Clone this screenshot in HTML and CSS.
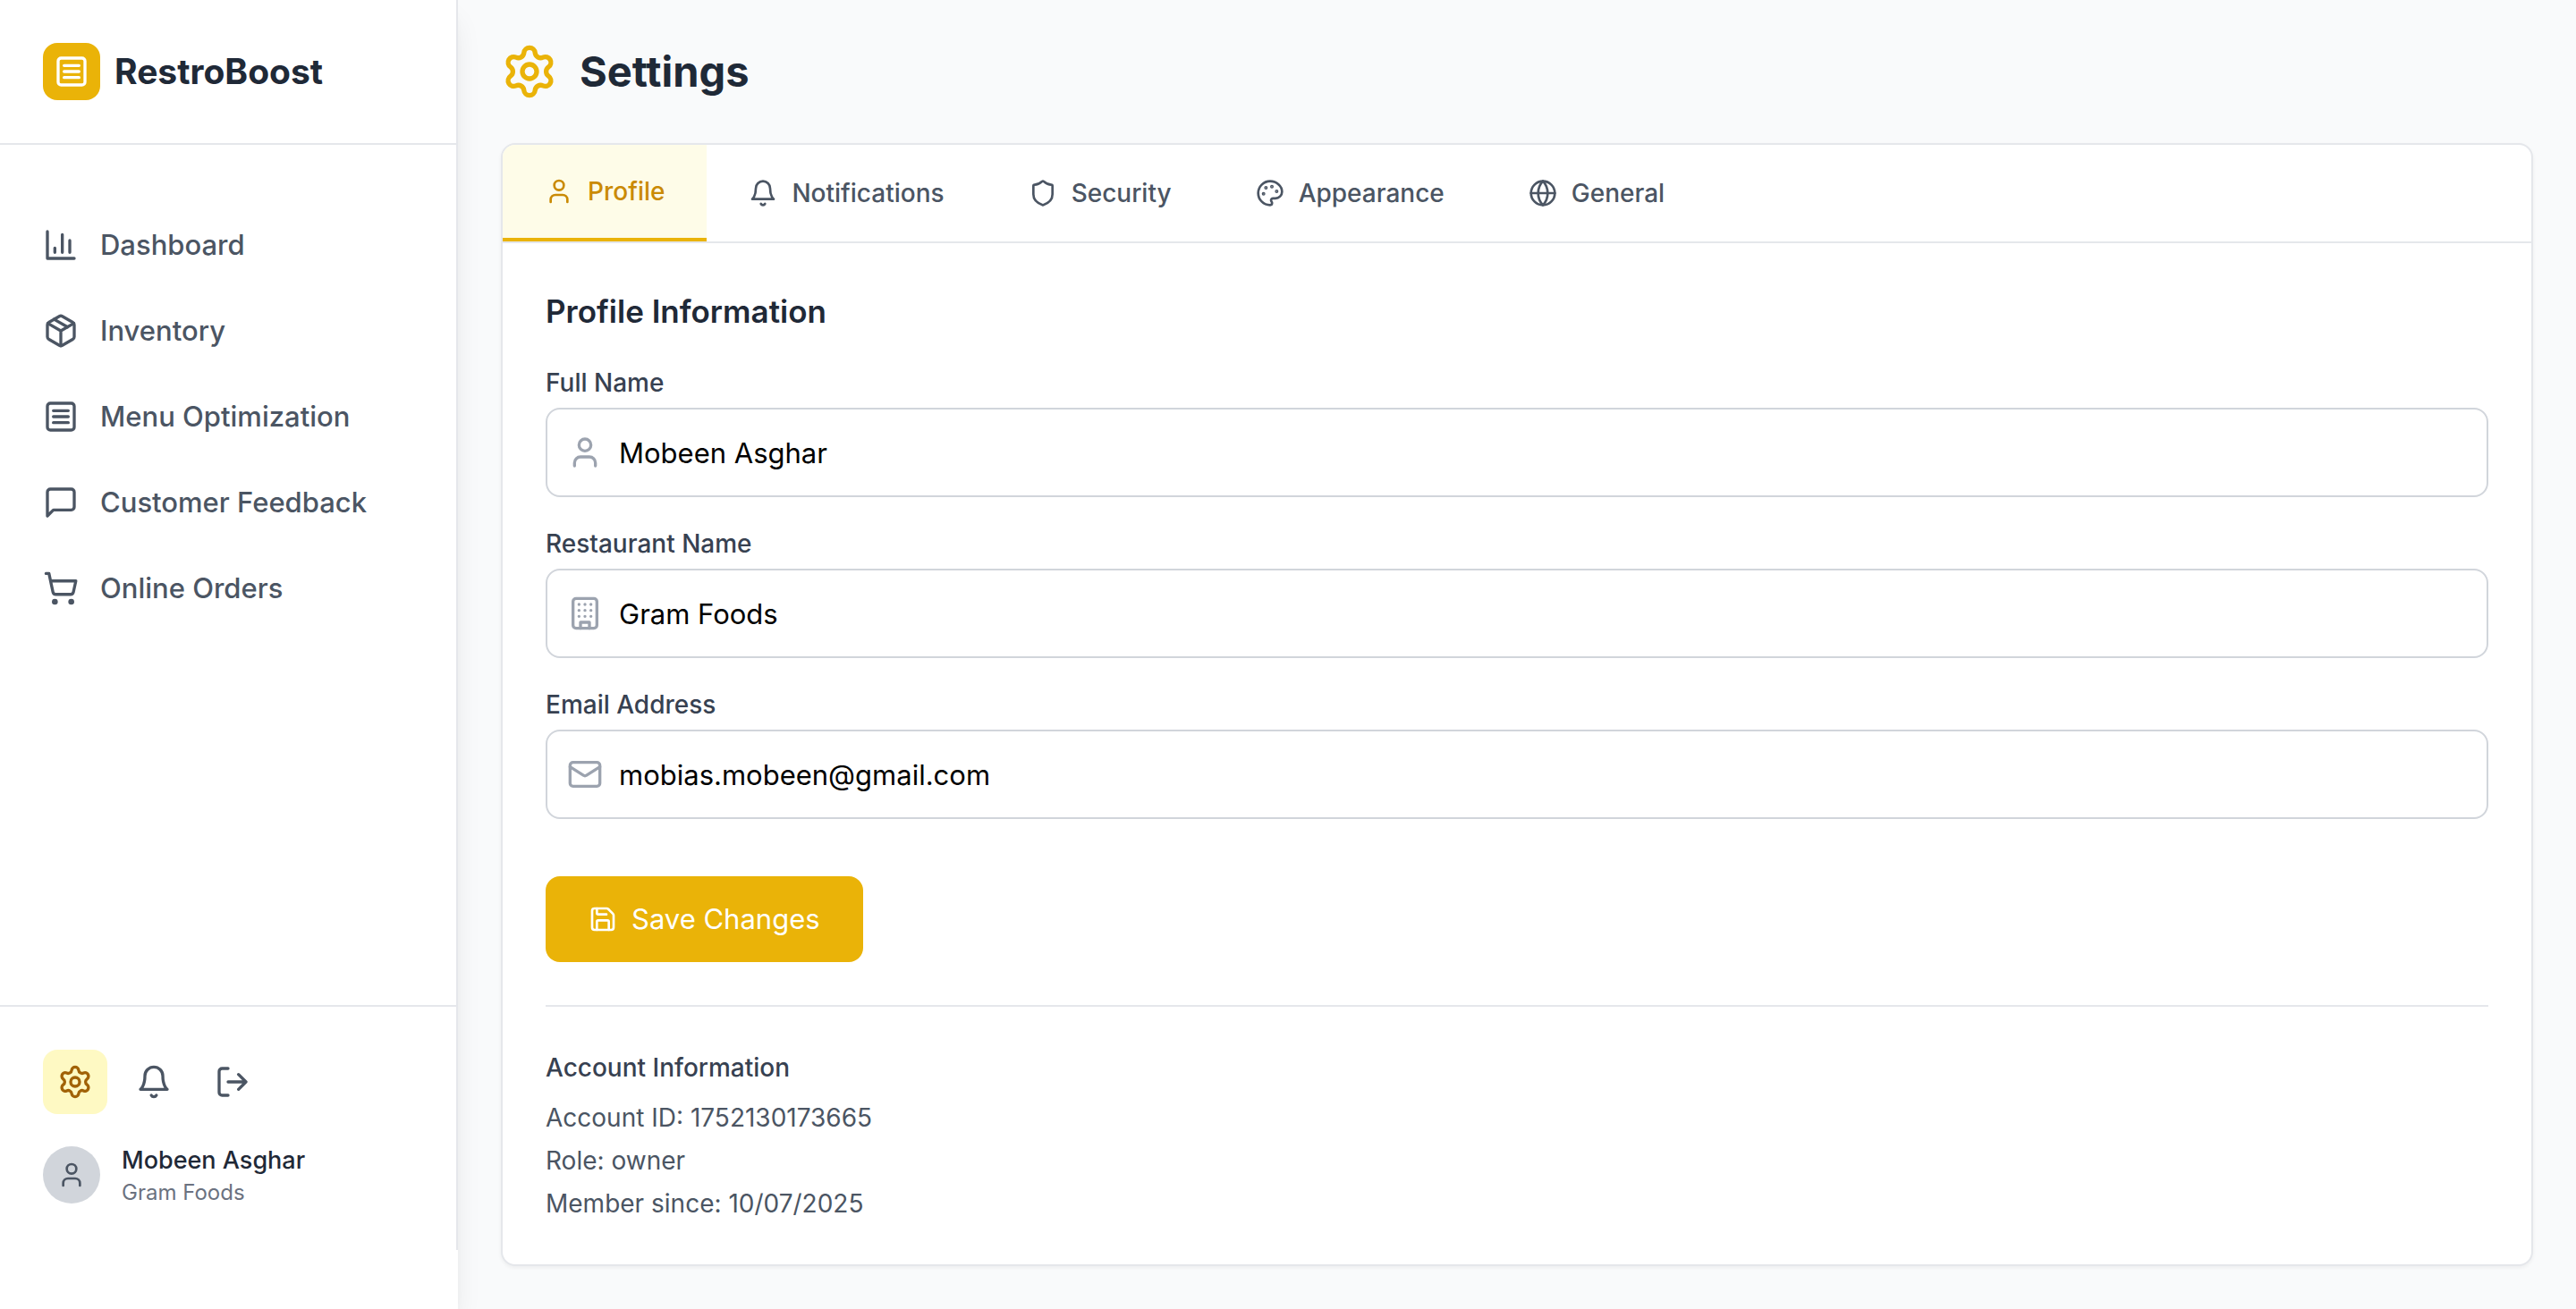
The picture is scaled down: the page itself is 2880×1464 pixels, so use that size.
FILE: index.html
```html
<!DOCTYPE html>
<html lang="en">
<head>
<meta charset="utf-8">
<meta name="viewport" content="width=device-width, initial-scale=1">
<title>Settings - RestroBoost</title>
<link rel="stylesheet" href="styles.css">
</head>
<body>
<svg class="sprite" aria-hidden="true">
  <symbol id="i-menu" viewBox="0 0 24 24"><rect width="18" height="18" x="3" y="3" rx="2"/><path d="M7 8h10M7 12h10M7 16h10"/></symbol>
  <symbol id="i-chart" viewBox="0 0 24 24"><path d="M3 3v18h18M18 17V9M13 17V5M8 17v-3"/></symbol>
  <symbol id="i-package" viewBox="0 0 24 24"><path d="m7.5 4.27 9 5.15"/><path d="M21 8a2 2 0 0 0-1-1.73l-7-4a2 2 0 0 0-2 0l-7 4A2 2 0 0 0 3 8v8a2 2 0 0 0 1 1.73l7 4a2 2 0 0 0 2 0l7-4A2 2 0 0 0 21 16Z"/><path d="m3.3 7 8.7 5 8.7-5M12 22V12"/></symbol>
  <symbol id="i-message" viewBox="0 0 24 24"><path d="M21 15a2 2 0 0 1-2 2H7l-4 4V5a2 2 0 0 1 2-2h14a2 2 0 0 1 2 2z"/></symbol>
  <symbol id="i-cart" viewBox="0 0 24 24"><circle cx="8" cy="21" r="1"/><circle cx="19" cy="21" r="1"/><path d="M2.05 2.05h2l2.66 12.42a2 2 0 0 0 2 1.58h9.78a2 2 0 0 0 1.95-1.57l1.65-7.43H5.12"/></symbol>
  <symbol id="i-settings" viewBox="0 0 24 24"><path d="M9.671 4.136a2.34 2.34 0 0 1 4.659 0 2.34 2.34 0 0 0 3.319 1.915 2.34 2.34 0 0 1 2.33 4.033 2.34 2.34 0 0 0 0 3.831 2.34 2.34 0 0 1-2.33 4.033 2.34 2.34 0 0 0-3.319 1.915 2.34 2.34 0 0 1-4.659 0 2.34 2.34 0 0 0-3.32-1.915 2.34 2.34 0 0 1-2.33-4.033 2.34 2.34 0 0 0 0-3.831A2.34 2.34 0 0 1 6.35 6.051a2.34 2.34 0 0 0 3.319-1.915"/><circle cx="12" cy="12" r="3"/></symbol>
  <symbol id="i-bell" viewBox="0 0 24 24"><path d="M6 8a6 6 0 0 1 12 0c0 7 3 9 3 9H3s3-2 3-9"/><path d="M10.3 21a1.94 1.94 0 0 0 3.4 0"/></symbol>
  <symbol id="i-logout" viewBox="0 0 24 24"><path d="M9 21H5a2 2 0 0 1-2-2V5a2 2 0 0 1 2-2h4M16 17l5-5-5-5M21 12H9"/></symbol>
  <symbol id="i-user" viewBox="0 0 24 24"><path d="M19 21v-2a4 4 0 0 0-4-4H9a4 4 0 0 0-4 4v2"/><circle cx="12" cy="7" r="4"/></symbol>
  <symbol id="i-shield" viewBox="0 0 24 24"><path d="M20 13c0 5-3.5 7.5-7.66 8.95a1 1 0 0 1-.67-.01C7.5 20.5 4 18 4 13V6a1 1 0 0 1 1-1c2 0 4.5-1.2 6.24-2.72a1.17 1.17 0 0 1 1.52 0C14.51 3.81 17 5 19 5a1 1 0 0 1 1 1z"/></symbol>
  <symbol id="i-palette" viewBox="0 0 24 24"><circle cx="13.5" cy="6.5" r=".5" fill="currentColor"/><circle cx="17.5" cy="10.5" r=".5" fill="currentColor"/><circle cx="8.5" cy="7.5" r=".5" fill="currentColor"/><circle cx="6.5" cy="12.5" r=".5" fill="currentColor"/><path d="M12 2C6.5 2 2 6.5 2 12s4.5 10 10 10c.926 0 1.648-.746 1.648-1.688 0-.437-.18-.835-.437-1.125-.29-.289-.438-.652-.438-1.125a1.64 1.64 0 0 1 1.668-1.668h1.996c3.051 0 5.555-2.503 5.555-5.554C21.965 6.012 17.461 2 12 2z"/></symbol>
  <symbol id="i-globe" viewBox="0 0 24 24"><circle cx="12" cy="12" r="10"/><path d="M12 2a14.5 14.5 0 0 0 0 20 14.5 14.5 0 0 0 0-20M2 12h20"/></symbol>
  <symbol id="i-building" viewBox="0 0 24 24"><rect width="16" height="20" x="4" y="2" rx="2"/><path d="M9 22v-4h6v4M8 6h.01M16 6h.01M12 6h.01M12 10h.01M12 14h.01M16 10h.01M16 14h.01M8 10h.01M8 14h.01"/></symbol>
  <symbol id="i-mail" viewBox="0 0 24 24"><rect width="20" height="16" x="2" y="4" rx="2"/><path d="m22 7-8.97 5.7a1.94 1.94 0 0 1-2.06 0L2 7"/></symbol>
  <symbol id="i-save" viewBox="0 0 24 24"><path d="M15.2 3a2 2 0 0 1 1.4.6l3.8 3.8a2 2 0 0 1 .6 1.4V19a2 2 0 0 1-2 2H5a2 2 0 0 1-2-2V5a2 2 0 0 1 2-2z"/><path d="M17 21v-7a1 1 0 0 0-1-1H8a1 1 0 0 0-1 1v7M7 3v4a1 1 0 0 0 1 1h7"/></symbol>
</svg>

<div class="app">
  <aside class="sidebar">
    <div class="sidebar-inner">
      <div class="brand">
        <span class="brand-mark"><svg class="icon icon-md"><use href="#i-menu"/></svg></span>
        <span class="brand-name">RestroBoost</span>
      </div>
      <nav class="nav">
        <a class="nav-link" href="#dashboard"><svg class="icon icon-md"><use href="#i-chart"/></svg>Dashboard</a>
        <a class="nav-link" href="#inventory"><svg class="icon icon-md"><use href="#i-package"/></svg>Inventory</a>
        <a class="nav-link" href="#menu"><svg class="icon icon-md"><use href="#i-menu"/></svg>Menu Optimization</a>
        <a class="nav-link" href="#feedback"><svg class="icon icon-md"><use href="#i-message"/></svg>Customer Feedback</a>
        <a class="nav-link" href="#orders"><svg class="icon icon-md"><use href="#i-cart"/></svg>Online Orders</a>
      </nav>
      <div class="sidebar-footer">
        <div class="actions">
          <button class="action action-active" type="button" aria-label="Settings"><svg class="icon icon-md"><use href="#i-settings"/></svg></button>
          <button class="action" type="button" aria-label="Notifications"><svg class="icon icon-md"><use href="#i-bell"/></svg></button>
          <button class="action" type="button" aria-label="Log out"><svg class="icon icon-md"><use href="#i-logout"/></svg></button>
        </div>
        <div class="user">
          <span class="avatar"><svg class="icon icon-sm"><use href="#i-user"/></svg></span>
          <div>
            <p class="user-name">Mobeen Asghar</p>
            <p class="user-place">Gram Foods</p>
          </div>
        </div>
      </div>
    </div>
  </aside>

  <main class="main">
    <header class="page-header">
      <svg class="icon icon-lg"><use href="#i-settings"/></svg>
      <h1 class="page-title">Settings</h1>
    </header>

    <section class="card">
      <div class="tabs" role="tablist">
        <button class="tab tab-active" type="button" role="tab" aria-selected="true"><svg class="icon icon-sm"><use href="#i-user"/></svg>Profile</button>
        <button class="tab" type="button" role="tab" aria-selected="false"><svg class="icon icon-sm"><use href="#i-bell"/></svg>Notifications</button>
        <button class="tab" type="button" role="tab" aria-selected="false"><svg class="icon icon-sm"><use href="#i-shield"/></svg>Security</button>
        <button class="tab" type="button" role="tab" aria-selected="false"><svg class="icon icon-sm"><use href="#i-palette"/></svg>Appearance</button>
        <button class="tab" type="button" role="tab" aria-selected="false"><svg class="icon icon-sm"><use href="#i-globe"/></svg>General</button>
      </div>

      <div class="panel" role="tabpanel">
        <h2 class="section-title">Profile Information</h2>
        <form class="form">
          <div class="field">
            <label class="label" for="full-name">Full Name</label>
            <div class="control">
              <svg class="icon icon-md control-icon"><use href="#i-user"/></svg>
              <input class="input" id="full-name" type="text" value="Mobeen Asghar">
            </div>
          </div>
          <div class="field">
            <label class="label" for="restaurant">Restaurant Name</label>
            <div class="control">
              <svg class="icon icon-md control-icon"><use href="#i-building"/></svg>
              <input class="input" id="restaurant" type="text" value="Gram Foods">
            </div>
          </div>
          <div class="field">
            <label class="label" for="email">Email Address</label>
            <div class="control">
              <svg class="icon icon-md control-icon"><use href="#i-mail"/></svg>
              <input class="input" id="email" type="email" value="mobias.mobeen@gmail.com">
            </div>
          </div>
          <button class="save" type="button"><svg class="icon icon-sm"><use href="#i-save"/></svg>Save Changes</button>
        </form>

        <div class="account">
          <h3 class="account-title">Account Information</h3>
          <p>Account ID: 1752130173665</p>
          <p>Role: owner</p>
          <p>Member since: 10/07/2025</p>
        </div>
      </div>
    </section>
  </main>
</div>
</body>
</html>
```
FILE: styles.css
```css
*,
*::before,
*::after {
  box-sizing: border-box;
}

body {
  margin: 0;
  background: #f9fafb;
  color: #1f2937;
  font-family: Inter, "Liberation Sans", sans-serif;
  font-size: 31px;
  line-height: 48px;
}

h1, h2, h3, p {
  margin: 0;
}

button, input {
  font: inherit;
  color: inherit;
}

button {
  border: 0;
  background: none;
  cursor: pointer;
}

.sprite {
  display: none;
}

.icon {
  display: block;
  flex: none;
  fill: none;
  stroke: currentColor;
  stroke-width: 2px;
  stroke-linecap: round;
  stroke-linejoin: round;
}

.icon-sm { width: 32px; height: 32px; }
.icon-md { width: 40px; height: 40px; }
.icon-lg { width: 64px; height: 64px; }

.app {
  display: flex;
  min-height: 100vh;
}

/* Sidebar */
.sidebar {
  display: flex;
  flex: none;
  flex-direction: column;
  width: 512px;
  padding-bottom: 66px;
  background: #fff;
  box-shadow: 0 20px 30px -6px rgba(0, 0, 0, 0.1), 0 8px 12px -8px rgba(0, 0, 0, 0.1);
}

.sidebar-inner {
  display: flex;
  flex: 1;
  flex-direction: column;
  border-right: 2px solid #e5e7eb;
}

.brand {
  display: flex;
  align-items: center;
  gap: 16px;
  padding: 48px;
  border-bottom: 2px solid #e5e7eb;
}

.brand-mark {
  display: grid;
  place-items: center;
  width: 64px;
  height: 64px;
  border-radius: 16px;
  background: #eab308;
  color: #fff;
}

.brand-name {
  font-size: 39px;
  font-weight: 700;
  line-height: 56px;
}

.nav {
  display: flex;
  flex: 1;
  flex-direction: column;
  gap: 16px;
  padding: 72px 48px;
}

.nav-link {
  display: flex;
  align-items: center;
  gap: 24px;
  padding: 16px 0;
  color: #4b5563;
  font-weight: 500;
  text-decoration: none;
  white-space: nowrap;
}

.sidebar-footer {
  display: flex;
  flex-direction: column;
  gap: 32px;
  padding: 48px;
  border-top: 2px solid #e5e7eb;
}

.actions {
  display: flex;
  gap: 16px;
}

.action {
  padding: 16px;
  border-radius: 16px;
  color: #4b5563;
}

.action-active {
  background: #fef9c3;
  color: #a16207;
}

.user {
  display: flex;
  align-items: center;
  gap: 24px;
}

.avatar {
  display: grid;
  place-items: center;
  width: 64px;
  height: 64px;
  border-radius: 50%;
  background: #d1d5db;
  color: #4b5563;
}

.user-name {
  font-size: 27px;
  font-weight: 500;
  line-height: 40px;
}

.user-place {
  color: #6b7280;
  font-size: 24px;
  line-height: 32px;
}

/* Page */
.main {
  flex: 1;
  min-width: 0;
  padding: 48px;
}

.page-header {
  display: flex;
  align-items: center;
  gap: 24px;
  margin-bottom: 48px;
  color: #eab308;
}

.page-title {
  color: #1f2937;
  font-size: 47px;
  font-weight: 700;
  line-height: 64px;
}

.card {
  overflow: hidden;
  border: 2px solid #e5e7eb;
  border-radius: 16px;
  background: #fff;
  box-shadow: 0 2px 4px rgba(0, 0, 0, 0.05);
}

.tabs {
  display: flex;
  border-bottom: 2px solid #e5e7eb;
}

.tab {
  display: flex;
  align-items: center;
  gap: 16px;
  padding: 32px 47px;
  color: #4b5563;
  font-size: 28px;
  font-weight: 500;
  line-height: 40px;
}

.tab-active {
  border-bottom: 4px solid #eab308;
  background: #fefce8;
  color: #ca8a04;
}

.panel {
  padding: 48px;
}

.section-title {
  margin-bottom: 32px;
  font-size: 35px;
  font-weight: 600;
  line-height: 56px;
}

.form {
  display: flex;
  flex-direction: column;
  gap: 32px;
}

.field {
  display: flex;
  flex-direction: column;
  gap: 8px;
}

.label {
  color: #374151;
  font-size: 28px;
  font-weight: 500;
  line-height: 40px;
}

.control {
  display: grid;
  align-items: center;
}

.control > * {
  grid-area: 1 / 1;
}

.control-icon {
  z-index: 1;
  margin-left: 24px;
  color: #9ca3af;
  pointer-events: none;
}

.input {
  width: 100%;
  height: 100px;
  padding: 24px 24px 24px 80px;
  border: 2px solid #d1d5db;
  border-radius: 16px;
  background: #fff;
  color: #000;
}

.save {
  display: flex;
  align-items: center;
  align-self: flex-start;
  gap: 16px;
  margin-top: 32px;
  padding: 24px 48px;
  border-radius: 16px;
  background: #eab308;
  color: #fff;
}

.account {
  display: flex;
  flex-direction: column;
  gap: 8px;
  margin-top: 48px;
  padding-top: 48px;
  border-top: 2px solid #e5e7eb;
  color: #4b5563;
  font-size: 28px;
  line-height: 40px;
}

.account-title {
  margin-bottom: 8px;
  color: #374151;
  font-size: 28px;
  font-weight: 500;
}
```
